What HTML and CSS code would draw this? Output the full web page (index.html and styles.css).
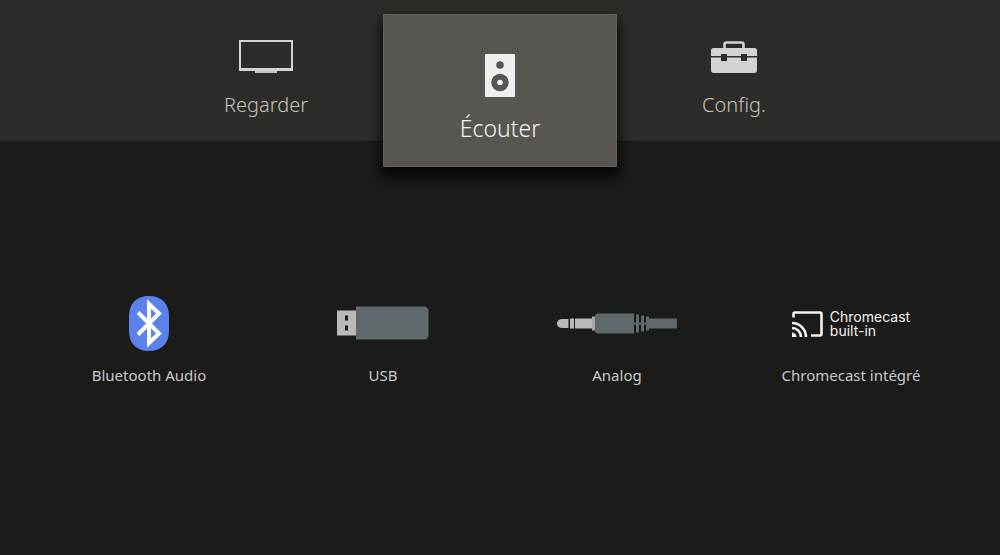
FILE: index.html
```
<!DOCTYPE html>
<html lang="fr">
<head>
    <meta charset="UTF-8" />
    <meta name="viewport" content="width=device-width, initial-scale=1" />
    <title>Écouter</title>
    <link rel="stylesheet" href="styles.css">
</head>
<body>

    <nav class="tabs">
        <button type="button" class="tab">
            <svg class="tab-icon" width="54" height="34" viewBox="0 0 54 34">
                <rect x="1" y="1" width="52" height="29" fill="none" stroke="#d2d2cf" stroke-width="2" />
                <rect x="1" y="28" width="52" height="2" fill="#d2d2cf" />
                <rect x="16" y="31" width="22" height="2" fill="#c4c4c1" />
            </svg>
            <span class="tab-label">Regarder</span>
        </button>
        <button type="button" class="tab active" aria-current="page">
            <svg class="tab-icon" width="30" height="43" viewBox="0 0 30 43">
                <rect width="30" height="43" rx="1" fill="#efefef" />
                <circle cx="15" cy="11" r="3.8" fill="#595652" />
                <circle cx="15" cy="28.5" r="8.7" fill="#595652" />
                <circle cx="15" cy="28.5" r="2.8" fill="#efefef" />
            </svg>
            <span class="tab-label">Écouter</span>
        </button>
        <button type="button" class="tab">
            <svg class="tab-icon" width="46" height="34" viewBox="0 0 46 34">
                <path d="M13.500 9V4.500a2 2 0 0 1 2-2h15a2 2 0 0 1 2 2V9" fill="none" stroke="#d2d2cf" stroke-width="2.600" />
                <path d="M2.500 8h41a2.500 2.500 0 0 1 2.500 2.500V16H36v-2h-6v2H16v-2h-6v2H0v-5.500A2.500 2.500 0 0 1 2.500 8z" fill="#d2d2cf" />
                <path d="M0 17.500h10V21h6v-3.500h14V21h6v-3.500h10v12.500a3 3 0 0 1-3 3H3a3 3 0 0 1-3-3z" fill="#d2d2cf" />
            </svg>
            <span class="tab-label">Config.</span>
        </button>
    </nav>

    <main class="sources">
        <button type="button" class="source">
            <svg class="source-icon" width="40" height="55" viewBox="0 0 40 55">
                <path d="M20 0C33 0 40 8 40 20v15c0 12-7 20-20 20S0 47 0 35V20C0 8 7 0 20 0z" fill="#5b82ea" />
                <path d="M9 16.500L30 37.500L20 47V8L30 17.500L9 38.500" fill="none" stroke="#fff" stroke-width="4" stroke-miterlimit="6" />
            </svg>
            <span class="source-label">Bluetooth Audio</span>
        </button>
        <button type="button" class="source">
            <svg class="source-icon" width="92" height="34" viewBox="0 0 92 34">
                <rect x="0" y="4" width="19" height="25" fill="#b9b9b9" />
                <rect x="8" y="9" width="3" height="5" fill="#1b1b19" />
                <rect x="8" y="19" width="3" height="5" fill="#1b1b19" />
                <path d="M19 0h68a4.500 4.500 0 0 1 4.500 4.500v24a4.500 4.500 0 0 1-4.500 4.500H19z" fill="#5f686a" />
            </svg>
            <span class="source-label">USB</span>
        </button>
        <button type="button" class="source">
            <svg class="source-icon" width="120" height="20" viewBox="0 0 120 20">
                <path d="M4 5.500h7.500v9H4Q0 13.500 0 10t4-4.500z" fill="#b9b9b9" />
                <rect x="13" y="5" width="4" height="10" fill="#b9b9b9" />
                <rect x="18" y="5" width="18" height="10" fill="#b9b9b9" />
                <rect x="35" y="3" width="3" height="14" fill="#a3a7a7" />
                <path d="M40 0h37v20H40l-2-2V2z" fill="#5f686a" />
                <path d="M77 9h15v2H77zM79 1h3v18h-3zM84 2h3v16h-3zM89 3h3v14h-3zM92 5h28v10H92z" fill="#5f686a" />
            </svg>
            <span class="source-label">Analog</span>
        </button>
        <button type="button" class="source">
            <span class="source-icon cast">
                <svg width="31" height="26" viewBox="0 0 31 26">
                    <path d="M1.500 6.500V3q0-1.500 1.500-1.500h25q1.500 0 1.500 1.500v20q0 1.500-1.500 1.500H19" fill="none" stroke="#f2f2f2" stroke-width="2.600" />
                    <path d="M0 21.500a4.500 4.500 0 0 1 4.500 4.500H0z" fill="#f2f2f2" />
                    <path d="M0 17a9 9 0 0 1 9 9M0 12a14 14 0 0 1 14 14" fill="none" stroke="#f2f2f2" stroke-width="2.600" />
                </svg>
                <span class="cast-text">
                    <span>Chromecast</span>
                    <span>built-in</span>
                </span>
            </span>
            <span class="source-label">Chromecast intégré</span>
        </button>
    </main>

</body>
</html>
```

FILE: styles.css
```
* {
    box-sizing: border-box;
}
body {
    margin: 0;
    min-height: 100vh;
    background-color: #1b1b19;
    font-family: "Noto Sans", sans-serif;
}
button {
    margin: 0;
    padding: 0;
    border: none;
    background: none;
    font-family: inherit;
    cursor: pointer;
    display: flex;
    flex-direction: column;
    align-items: center;
}
.tabs {
    display: grid;
    grid-template-columns: repeat(3, 25%);
    justify-content: center;
    align-items: start;
    padding: 14px 32px 0;
    background-color: #2e2c28;
}
.tab {
    padding-top: 26px;
    gap: 16px;
    color: #c4c3bf;
}
.tab-label {
    font-size: 20px;
    font-weight: 300;
    line-height: 30px;
}
.tab.active {
    padding: 39px 0 23px;
    margin-bottom: -26px;
    border: 1px solid #64615d;
    background-color: #595652;
    box-shadow: 0 8px 12px 2px rgba(0,0,0,0.8);
    color: #f5f5f5;
}
.tab.active .tab-label {
    font-size: 23px;
}
.sources {
    display: grid;
    grid-template-columns: repeat(4, 1fr);
    padding: 155px 32px 32px;
}
.source {
    color: #c8c8c8;
}
.source-icon {
    height: 55px;
}
.source-label {
    margin-top: 12px;
    font-size: 15px;
    line-height: 24px;
}
.cast {
    display: flex;
    align-items: center;
    gap: 7px;
    color: #f2f2f2;
}
.cast-text {
    display: flex;
    flex-direction: column;
    font-family: Inter, sans-serif;
    font-size: 14px;
    line-height: 14px;
    text-align: left;
}
```
